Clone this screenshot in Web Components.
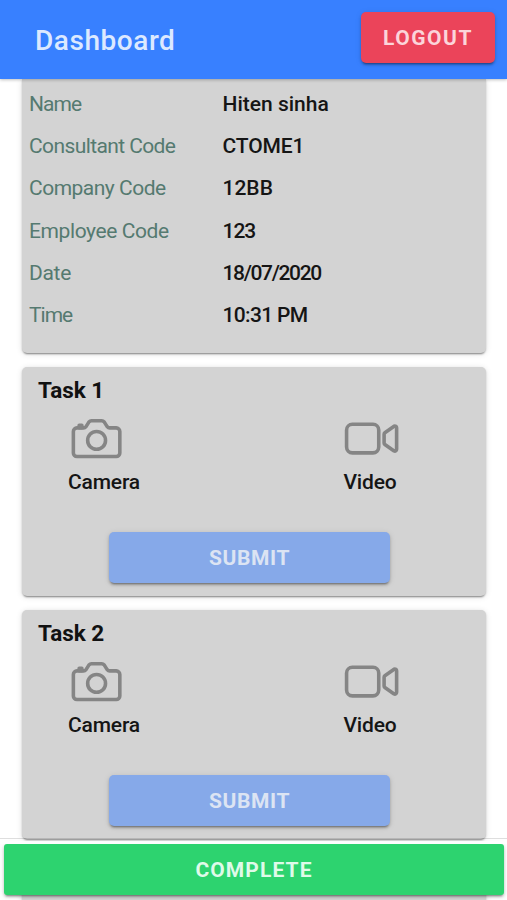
<!DOCTYPE html>
<html lang="en"><head><meta charset="utf-8"><title>Dashboard</title>
<style>
html,body{margin:0;height:900px;overflow:hidden;background:#fff;font-family:Roboto,sans-serif}
</style></head><body>
<dash-app></dash-app>
<script>
const define = (name, html, setup) => customElements.define(name, class extends HTMLElement {
  connectedCallback() {
    if (this.shadowRoot) return;
    this.attachShadow({mode:'open'}).innerHTML = html;
    if (setup) setup(this, this.shadowRoot);
  }
});

define('dash-button', `<style>
:host{display:flex;align-items:center;justify-content:center;box-sizing:border-box;height:51px;border-radius:5px;
font-size:21px;font-weight:700;line-height:24px;color:#fff;
box-shadow:0 3px 2px -2px rgba(0,0,0,.3),0 2px 3px rgba(0,0,0,.2),0 1px 6px rgba(0,0,0,.1)}
:host([kind=danger]){background:#eb445a;color:#fbd5da;width:134px;letter-spacing:1.5px}
:host([kind=submit]){background:#86a9e9;color:#dce4f3;width:281px;letter-spacing:.6px}
:host([kind=complete]){background:#2dd36f;color:#dffae9;border-radius:3px;width:500px;letter-spacing:1.1px}
</style><span><slot></slot></span>`);

define('dash-header', `<style>
:host{display:flex;align-items:flex-start;justify-content:space-between;box-sizing:border-box;height:79px;flex:none;
padding:12px 12px 0 35px;background:#3880ff;box-shadow:0 1px 3px rgba(0,0,0,.25);position:relative;z-index:1}
h1{margin:0;padding-top:12px;font-size:28px;line-height:34px;font-weight:500;color:#dce9ff;letter-spacing:.55px}
</style><h1><slot></slot></h1><dash-button kind="danger">LOGOUT</dash-button>`);

define('dash-card', `<style>
:host{display:block;box-sizing:border-box;width:464px;background:#d3d3d3;border-radius:5px;flex:none;
box-shadow:0 3px 2px -2px rgba(0,0,0,.3),0 1px 2px rgba(0,0,0,.2),0 1px 6px rgba(0,0,0,.12)}
:host([kind=info]){height:273.6px;padding:4px 7px 0;border-radius:0 0 5px 5px}
:host([kind=task]){height:229px}
</style><slot></slot>`);

define('info-row', `<style>
:host{display:grid;grid-template-columns:193.5px 1fr;height:42.2px;align-items:start;font-size:21px;line-height:42px}
.l{color:#557a70}.v{color:#151515;font-weight:500}
</style><span class="l"></span><span class="v"></span>`, (el, r) => {
  for (const [cls, key] of [['.l','label'],['.v','value']]) {
    const s = r.querySelector(cls);
    s.textContent = el.getAttribute(key);
    s.style.letterSpacing = (el.getAttribute(key + '-gap') || 0) + 'px';
  }
});

const icons = {
  camera: '<path d="M350.54 148.68l-26.62-42.06C318.31 100.08 310.62 96 302 96h-92c-8.62 0-16.31 4.08-21.92 10.62l-26.62 42.06C155.85 155.23 148.62 160 140 160H80a32 32 0 00-32 32v192a32 32 0 0032 32h352a32 32 0 0032-32V192a32 32 0 00-32-32h-59c-8.65 0-16.85-4.77-22.46-11.32z"/><circle cx="256" cy="272" r="80"/><path d="M124 158v-22h-24v22"/>',
  video: '<path d="M374.79 308.78L457.5 367a16 16 0 0022.5-14.62V159.62A16 16 0 00457.5 145l-82.71 58.22A16 16 0 00368 216.3v79.4a16 16 0 006.79 13.08z"/><path d="M268 384H84a52.15 52.15 0 01-52-52V180a52.15 52.15 0 0152-52h184.48A51.68 51.68 0 01320 179.52V332a52.15 52.15 0 01-52 52z"/>'
};
define('media-action', `<style>
:host{display:flex;flex-direction:column;align-items:flex-start;font-size:21px;line-height:24px;font-weight:500;letter-spacing:-.15px;color:#151515}
svg{display:block;width:57.2px;height:57.2px;fill:none;stroke:#858585;stroke-width:32;stroke-linecap:round;stroke-linejoin:round}
span{margin-top:3px}
</style><svg viewBox="0 0 512 512"></svg><span><slot></slot></span>`, (el, r) => {
  r.querySelector('svg').innerHTML = icons[el.getAttribute('icon')];
});

define('task-card', `<style>
:host{display:block;flex:none}
.body{display:flex;flex-direction:column;height:229px}
h2{margin:10px 0 0 16px;height:33.4px;font-size:22.5px;line-height:27px;font-weight:700;letter-spacing:-.05px;color:#111}
.media{display:grid;grid-template-columns:275.4px auto;padding-left:46px;height:122.1px;justify-content:start}
dash-button{align-self:flex-start;margin-left:87px}
</style><dash-card kind="task"><div class="body"><h2></h2>
<div class="media"><media-action icon="camera">Camera</media-action><media-action icon="video">Video</media-action></div>
<dash-button kind="submit">SUBMIT</dash-button></div></dash-card>`, (el, r) => {
  r.querySelector('h2').textContent = el.getAttribute('name');
});

define('dash-footer', `<style>
:host{position:absolute;left:0;right:0;bottom:0;height:62px;box-sizing:border-box;border-top:1px solid rgba(0,0,0,.13);
padding:5px 0 0 4px;z-index:2}
:host::before{content:"";position:absolute;left:0;right:0;top:2px;height:3px;background:rgba(255,255,255,.85)}
</style><dash-button kind="complete">COMPLETE</dash-button>`);

define('dash-app', `<style>
:host{display:flex;flex-direction:column;position:relative;width:507px;height:900px;overflow:hidden}
main{display:flex;flex-direction:column;gap:14px;padding-left:22px}
</style><dash-header>Dashboard</dash-header>
<main><dash-card kind="info">
<info-row label="Name" label-gap="-.9" value="Hiten sinha"></info-row>
<info-row label="Consultant Code" label-gap="-.6" value="CTOME1" value-gap="-.1"></info-row>
<info-row label="Company Code" label-gap="-.5" value="12BB"></info-row>
<info-row label="Employee Code" label-gap="-.4" value="123" value-gap="-1"></info-row>
<info-row label="Date" label-gap="-.3" value="18/07/2020" value-gap="-1.35"></info-row>
<info-row label="Time" label-gap="-1" value="10:31 PM" value-gap="-.65"></info-row>
</dash-card>
<task-card name="Task 1"></task-card><task-card name="Task 2"></task-card><dash-card kind="task"></dash-card></main>
<dash-footer></dash-footer>`);
</script></body></html>
